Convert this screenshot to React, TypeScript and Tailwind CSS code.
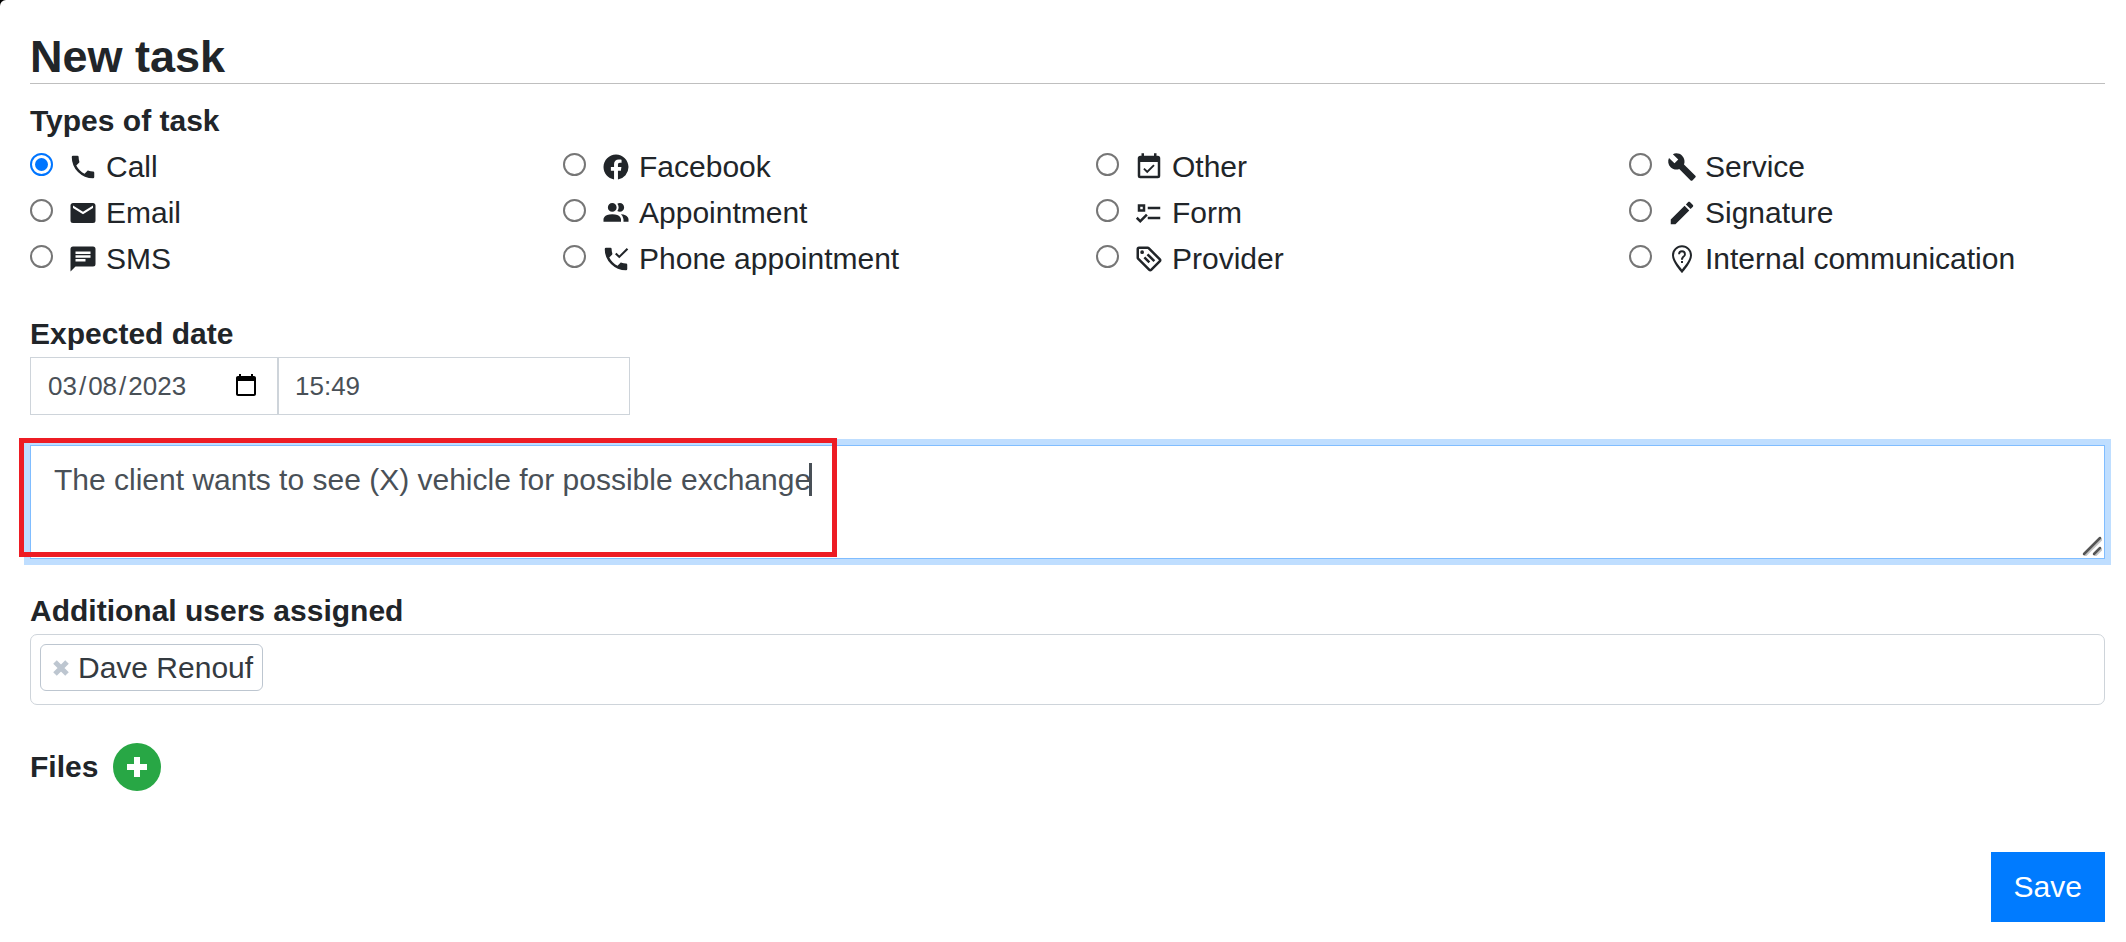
import { useState } from 'react';

type TaskType = {
  id: string;
  label: string;
  icon: string;
};

// Listed column by column, three per column
const taskTypes: TaskType[] = [
  {
    id: 'call',
    label: 'Call',
    icon: 'M6.62 10.79C8.06 13.62 10.38 15.94 13.21 17.38L15.41 15.18C15.69 14.9 16.08 14.82 16.43 14.93C17.55 15.3 18.75 15.5 20 15.5A1 1 0 0 1 21 16.5V20A1 1 0 0 1 20 21A17 17 0 0 1 3 4A1 1 0 0 1 4 3H7.5A1 1 0 0 1 8.5 4C8.5 5.25 8.7 6.45 9.07 7.57C9.18 7.92 9.1 8.31 8.82 8.59L6.62 10.79Z',
  },
  {
    id: 'email',
    label: 'Email',
    icon: 'M20 8L12 13L4 8V6L12 11L20 6M20 4H4C2.89 4 2 4.89 2 6V18A2 2 0 0 0 4 20H20A2 2 0 0 0 22 18V6C22 4.89 21.1 4 20 4Z',
  },
  {
    id: 'sms',
    label: 'SMS',
    icon: 'M20 2H4A2 2 0 0 0 2 4V22L6 18H20A2 2 0 0 0 22 16V4A2 2 0 0 0 20 2M6 9H18V11H6M14 14H6V12H14M18 8H6V6H18',
  },
  {
    id: 'facebook',
    label: 'Facebook',
    icon: 'M12 2.04C6.5 2.04 2 6.53 2 12.06C2 17.06 5.66 21.21 10.44 21.96V14.96H7.9V12.06H10.44V9.85C10.44 7.34 11.93 5.96 14.22 5.96C15.31 5.96 16.45 6.15 16.45 6.15V8.62H15.19C13.95 8.62 13.56 9.39 13.56 10.18V12.06H16.34L15.89 14.96H13.56V21.96A10 10 0 0 0 22 12.06C22 6.53 17.5 2.04 12 2.04Z',
  },
  {
    id: 'appointment',
    label: 'Appointment',
    icon: 'M16 17V19H2V17S2 13 9 13 16 17 16 17M12.5 7.5A3.5 3.5 0 1 0 9 11A3.5 3.5 0 0 0 12.5 7.5M15.94 13A5.32 5.32 0 0 1 18 17V19H22V17S22 13.37 15.94 13M15 4A3.39 3.39 0 0 0 13.07 4.59A5 5 0 0 1 13.07 10.41A3.39 3.39 0 0 0 15 11A3.5 3.5 0 0 0 15 4Z',
  },
  {
    id: 'phone-appointment',
    label: 'Phone appointment',
    icon: 'M6.62 10.79C8.06 13.62 10.38 15.94 13.21 17.38L15.41 15.18C15.69 14.9 16.08 14.82 16.43 14.93C17.55 15.3 18.75 15.5 20 15.5A1 1 0 0 1 21 16.5V20A1 1 0 0 1 20 21A17 17 0 0 1 3 4A1 1 0 0 1 4 3H7.5A1 1 0 0 1 8.5 4C8.5 5.25 8.7 6.45 9.07 7.57C9.18 7.92 9.1 8.31 8.82 8.59L6.62 10.79M14.6 11.4L11.2 8.1L12.4 6.9L14.6 9.1L20.6 3.2L21.8 4.4L14.6 11.4Z',
  },
  {
    id: 'other',
    label: 'Other',
    icon: 'M19 19H5V8H19M19 3H18V1H16V3H8V1H6V3H5C3.89 3 3 3.9 3 5V19A2 2 0 0 0 5 21H19A2 2 0 0 0 21 19V5A2 2 0 0 0 19 3M16.53 11.06L15.47 10L10.59 14.88L8.47 12.76L7.41 13.82L10.59 17L16.53 11.06Z',
  },
  {
    id: 'form',
    label: 'Form',
    icon: 'M3 5H9V11H3V5M5 7V9H7V7H5M11 7H21V9H11V7M11 15H21V17H11V15M5 20L1.5 16.5L2.91 15.09L5 17.17L9.59 12.59L11 14L5 20Z',
  },
  {
    id: 'provider',
    label: 'Provider',
    icon: 'M21.41 11.58L12.41 2.58A2 2 0 0 0 11 2H4A2 2 0 0 0 2 4V11A2 2 0 0 0 2.59 12.42L11.59 21.42A2 2 0 0 0 13 22A2 2 0 0 0 14.41 21.41L21.41 14.41A2 2 0 0 0 22 13A2 2 0 0 0 21.41 11.58M13 20L4 11V4H11L20 13M6.5 5A1.5 1.5 0 1 1 5 6.5A1.5 1.5 0 0 1 6.5 5M10.09 8.91L11.5 7.5L17 13L15.59 14.41L10.09 8.91M7.59 11.41L9 10L13 14L11.59 15.41L7.59 11.41Z',
  },
  {
    id: 'service',
    label: 'Service',
    icon: 'M22.7 19L13.6 9.9C14.5 7.6 14 4.9 12.1 3C10.1 1 7.1 .6 4.7 1.7L9 6L6 9L1.6 4.7C.4 7.1 .9 10.1 2.9 12.1C4.8 14 7.5 14.5 9.8 13.6L18.9 22.7C19.3 23.1 19.9 23.1 20.3 22.7L22.6 20.4C23.1 20 23.1 19.3 22.7 19Z',
  },
  {
    id: 'signature',
    label: 'Signature',
    icon: 'M20.71 7.04C21.1 6.65 21.1 6 20.71 5.63L18.37 3.29C18 2.9 17.35 2.9 16.96 3.29L15.12 5.12L18.87 8.87M3 17.25V21H6.75L17.81 9.93L14.06 6.18L3 17.25Z',
  },
  {
    id: 'internal',
    label: 'Internal communication',
    icon: 'M12 1C7.6 1 4 4.6 4 9C4 14.6 11.2 22.3 11.5 22.7L12 23.2L12.5 22.7C12.8 22.3 20 14.6 20 9C20 4.6 16.4 1 12 1M12 20.3C10 18 5.6 12.5 5.6 9A6.4 6.4 0 0 1 18.4 9C18.4 12.5 14 18 12 20.3M11.2 13.6H12.8V15.2H11.2V13.6M12 5A3.1 3.1 0 0 0 8.9 8.1H10.4A1.6 1.6 0 0 1 13.6 8.1C13.6 9.6 11.2 9.6 11.2 12.5H12.8C12.8 10.5 15.1 10.2 15.1 8.1A3.1 3.1 0 0 0 12 5Z',
  },
];

function TaskIcon({ path }: { path: string }) {
  return (
    <svg className="mr-2 size-[30px] shrink-0" viewBox="0 0 24 24" fill="currentColor" fillRule="evenodd" aria-hidden="true">
      <path d={path} />
    </svg>
  );
}

export default function App() {
  const [type, setType] = useState('call');
  const [date, setDate] = useState('2023-03-08');
  const [time, setTime] = useState('15:49');
  const [notes, setNotes] = useState('The client wants to see (X) vehicle for possible exchange');
  const [users, setUsers] = useState(['Dave Renouf']);

  return (
    <div className="bg-black">
      <form
        className="min-h-screen rounded-tl-md bg-white pt-[30px] pr-[21px] pb-5 pl-[30px] font-['Liberation_Sans',Arial,sans-serif] text-[30px] leading-[46px] text-[#212529]"
        onSubmit={(e) => e.preventDefault()}
      >
        <h1 className="border-b border-[#bfbfbf] text-[45px] leading-[53px] font-bold">New task</h1>

        {/* Task type */}
        <fieldset className="mt-[14px]">
          <legend className="font-bold">Types of task</legend>
          <div className="grid grid-flow-col grid-cols-4 grid-rows-3 gap-x-[57px]">
            {taskTypes.map(({ id, label, icon }) => (
              <label key={id} className="flex items-center whitespace-nowrap">
                <input
                  type="radio"
                  name="task-type"
                  value={id}
                  checked={type === id}
                  onChange={() => setType(id)}
                  className="mr-[15px] mb-[6px] size-[23px] shrink-0 appearance-none rounded-full border-2 border-[#767676] bg-white bg-clip-content p-[3px] checked:border-[#0075ff] checked:bg-[#0075ff]"
                />
                <TaskIcon path={icon} />
                {label}
              </label>
            ))}
          </div>
        </fieldset>

        {/* Date and time */}
        <div className="mt-[29px]">
          <label htmlFor="date" className="block font-bold">
            Expected date
          </label>
          <div className="flex text-[26px] leading-8 text-[#495057]">
            <input
              id="date"
              type="date"
              value={date}
              onChange={(e) => setDate(e.target.value)}
              className="h-[58px] w-[248px] border border-[#ced4da] px-4 [&::-webkit-datetime-edit-text]:px-px"
            />
            <input
              type="text"
              aria-label="Expected time"
              value={time}
              onChange={(e) => setTime(e.target.value)}
              className="h-[58px] w-[352px] border border-[#ced4da] px-4"
            />
          </div>
        </div>

        {/* Notes */}
        <div className="relative mt-[30px]">
          <textarea
            aria-label="Notes"
            value={notes}
            onChange={(e) => setNotes(e.target.value)}
            className="block h-[114px] w-full resize-none border border-[#80bdff] px-[23px] py-[11px] text-[#495057] caret-transparent ring-6 ring-[#bfdeff] outline-none"
          />
          <span className="pointer-events-none absolute top-[18px] left-[779px] h-[33px] w-[3px] bg-[#495057]" />
          <svg
            className="pointer-events-none absolute right-[3px] bottom-[3px] size-5"
            viewBox="0 0 20 20"
            fill="none"
            strokeLinecap="round"
            aria-hidden="true"
          >
            <path d="M3 20 20 3M13 20l7-7" stroke="#c4c4c4" strokeWidth="2" />
            <path d="M2 18 18 2M12 18l6-6" stroke="#555" strokeWidth="2.500" />
          </svg>
          <div className="pointer-events-none absolute -top-[7px] -left-[11px] h-[119px] w-[818px] border-5 border-[#ed1c24]" />
        </div>

        {/* Assigned users */}
        <div className="mt-[29px]">
          <h2 className="font-bold">Additional users assigned</h2>
          <div className="flex h-[71px] items-start gap-2 rounded-[7px] border border-[#ced4da] p-[9px]">
            {users.map((user) => (
              <div
                key={user}
                className="flex h-[47px] items-center rounded-md border border-[#bdc6d0] pr-[9px] pl-3 text-[#343a40]"
              >
                <button
                  type="button"
                  aria-label={`Remove ${user}`}
                  onClick={() => setUsers(users.filter((u) => u !== user))}
                  className="mr-[9px] text-[#bdc6d0]"
                >
                  <svg className="size-4" viewBox="0 0 16 16" stroke="currentColor" strokeWidth="5" aria-hidden="true">
                    <path d="m2 2 12 12M14 2 2 14" />
                  </svg>
                </button>
                {user}
              </div>
            ))}
          </div>
        </div>

        {/* Files */}
        <div className="mt-[38px] flex items-center gap-[15px]">
          <h2 className="font-bold">Files</h2>
          <button
            type="button"
            aria-label="Add file"
            className="flex size-12 items-center justify-center rounded-full bg-[#28a745] text-white"
          >
            <svg className="size-[22px]" viewBox="0 0 22 22" stroke="currentColor" strokeWidth="6" aria-hidden="true">
              <path d="M11 1v20M1 11h20" />
            </svg>
          </button>
        </div>

        <div className="mt-[61px] flex justify-end">
          <button type="submit" className="h-[70px] bg-[#007bff] px-[23px] text-white">
            Save
          </button>
        </div>
      </form>
    </div>
  );
}
